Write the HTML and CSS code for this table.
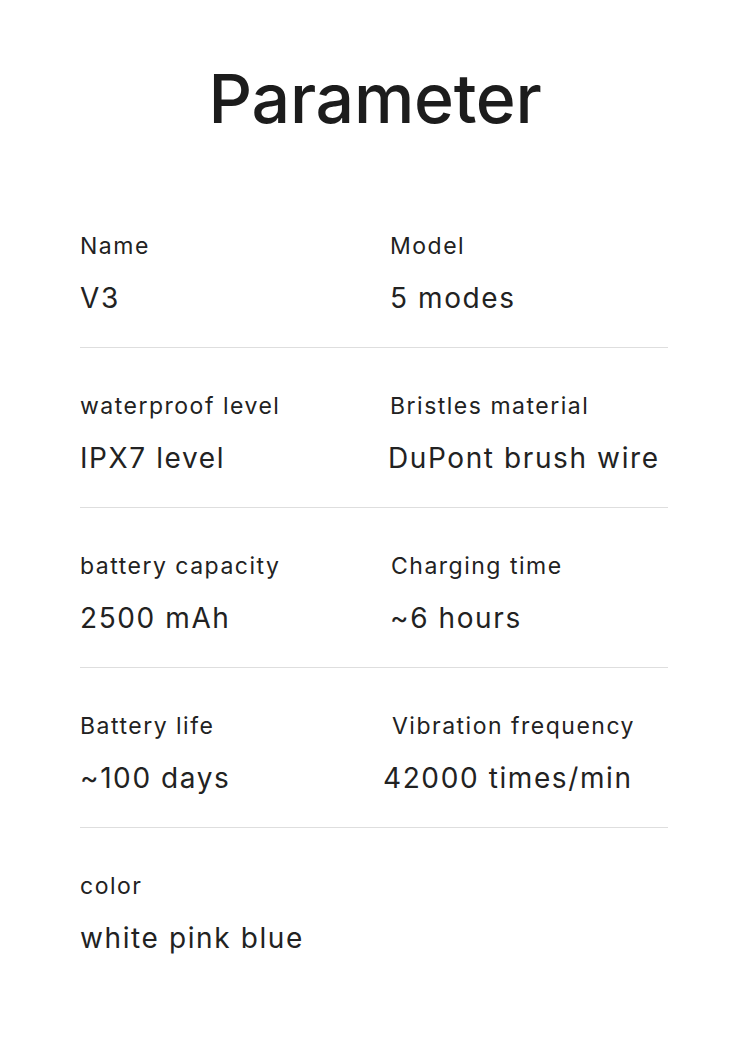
FILE: index.html
```html
<!DOCTYPE html>
<html lang="en">
<head>
<meta charset="utf-8">
<title>Parameter</title>
<link rel="stylesheet" href="styles.css">
</head>
<body>
<div class="page">
  <h1 class="title">Parameter</h1>
  <div class="table">
    <div class="row">
      <div class="cell"><div class="label">Name</div><div class="value">V3</div></div>
      <div class="cell"><div class="label">Model</div><div class="value">5 modes</div></div>
    </div>
    <div class="row">
      <div class="cell"><div class="label">waterproof level</div><div class="value">IPX7 level</div></div>
      <div class="cell"><div class="label">Bristles material</div><div class="value shift-l2">DuPont brush wire</div></div>
    </div>
    <div class="row">
      <div class="cell"><div class="label">battery capacity</div><div class="value">2500 mAh</div></div>
      <div class="cell"><div class="label shift-r1">Charging time</div><div class="value">~6 hours</div></div>
    </div>
    <div class="row">
      <div class="cell"><div class="label">Battery life</div><div class="value">~100 days</div></div>
      <div class="cell"><div class="label shift-r2">Vibration frequency</div><div class="value shift-l7">42000 times/min</div></div>
    </div>
    <div class="row last">
      <div class="cell"><div class="label">color</div><div class="value">white pink blue</div></div>
      <div class="cell"></div>
    </div>
  </div>
</div>
</body>
</html>
```

FILE: styles.css
```css
html, body {
  margin: 0;
  padding: 0;
  background: #ffffff;
}
body {
  font-family: Inter, "Noto Sans", sans-serif;
  color: #222222;
}
.page {
  width: 750px;
  height: 1058px;
  overflow: hidden;
}
.title {
  margin: 54px 0 46px;
  font-size: 68px;
  line-height: 88px;
  font-weight: 500;
  text-align: center;
  color: #1c1c1c;
  letter-spacing: -0.3px;
}
.table {
  margin-left: 80px;
  width: 588px;
}
.row {
  display: grid;
  grid-template-columns: 310px 1fr;
  padding: 43px 0 31px;
  border-bottom: 1px solid #dedede;
}
.row.last {
  border-bottom: none;
}
.label {
  font-size: 23px;
  line-height: 30px;
  margin-bottom: 19px;
  letter-spacing: 1.5px;
}
.value {
  font-size: 28px;
  line-height: 36px;
  letter-spacing: 1.6px;
}
.shift-r1 { margin-left: 1px; }
.shift-r2 { margin-left: 2px; }
.shift-l2 { margin-left: -2px; }
.shift-l7 { margin-left: -7px; }
```
